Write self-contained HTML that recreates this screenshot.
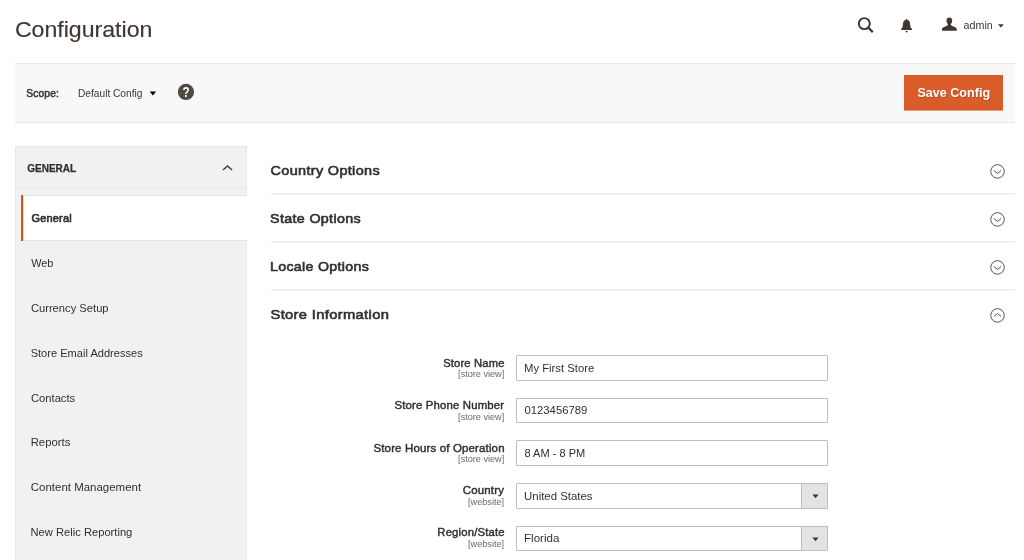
<!DOCTYPE html>
<html lang="en">
<head>
<meta charset="utf-8">
<title>Configuration</title>
<style>
html,body{margin:0;padding:0;}
body{width:1024px;height:560px;overflow:hidden;background:#fff;position:relative;font-family:"Liberation Sans",Arial,sans-serif;color:#303030;}
#wrap{position:absolute;left:0;top:0;width:1024px;height:560px;overflow:hidden;will-change:transform;}
.t{position:absolute;white-space:nowrap;line-height:1;margin:0;padding:0;}
.abs{position:absolute;}
/* scope bar */
#bar{left:15px;top:63px;width:1000px;height:58px;background:#f8f8f8;border-top:1px solid #e8e8e8;border-bottom:1px solid #e6e6e6;box-sizing:content-box;}
#save{left:904px;top:75px;width:99px;height:35px;background:#da5c28;border-bottom:1px solid #e89c7d;}
/* sidebar */
#nav{left:15px;top:146px;width:232px;height:414px;background:#f1f1f1;box-sizing:border-box;border:1px solid #e8e8e8;border-bottom:0;}
#navline{left:15px;top:188px;width:232px;height:1px;background:#e7e7e7;}
#navact{left:21px;top:195px;width:226px;height:46px;background:#fff;box-sizing:border-box;border-top:1px solid #e3e3e3;border-bottom:1px solid #e3e3e3;}
/* sections */
.sl{left:270.5px;width:744.5px;height:2px;background:#efefef;}
/* form */
.in{left:516px;width:312px;height:26px;box-sizing:border-box;border:1px solid #bebebe;background:#fff;border-radius:1px;}
.sb{left:801px;width:27px;height:26px;box-sizing:border-box;border:1px solid #bebebe;background:#e3e3e3;border-radius:0 1px 1px 0;}
</style>
</head>
<body>
<div id="wrap">

<!-- header icons -->
<svg class="abs" style="left:856px;top:16px" width="20" height="20" viewBox="0 0 20 20"><circle cx="8.3" cy="7.65" r="5.5" fill="none" stroke="#41362f" stroke-width="1.9"/><path d="M12.1 11.5 L16.8 16.1" stroke="#41362f" stroke-width="2.3" fill="none"/></svg>
<svg class="abs" style="left:898px;top:17px" width="18" height="18" viewBox="0 0 18 18"><path d="M8.55 1.9C7.9 1.9 7.6 2.3 7.6 2.9C5.8 3.2 5.2 4.6 5.1 6.2L4.6 9.8C4.6 10.6 4 11.2 3.2 11.7L3.2 12.9L13.9 12.9L13.9 11.7C13.1 11.2 12.5 10.6 12.4 9.8L12 6.2C11.9 4.6 11.3 3.2 9.5 2.9C9.5 2.3 9.2 1.9 8.55 1.9Z" fill="#41362f"/><path d="M7.1 14L10 14L8.55 15.8Z" fill="#41362f"/></svg>
<svg class="abs" style="left:940px;top:16px" width="18" height="16" viewBox="0 0 18 16"><path d="M9.35 1.5C7.6 1.5 6.5 2.7 6.5 4.6C6.5 6 7 7.2 7.8 7.9C8 8.3 8 8.9 7.6 9.2C6.6 9.9 5.2 10.5 4.2 11.1C3.2 11.6 2.2 12 2 12.8L2 14.85L16.7 14.85L16.7 12.8C16.5 12 15.5 11.6 14.5 11.1C13.5 10.5 12.1 9.9 11.1 9.2C10.7 8.9 10.7 8.3 10.9 7.9C11.7 7.2 12.2 6 12.2 4.6C12.2 2.7 11.1 1.5 9.35 1.5Z" fill="#41362f"/></svg>
<svg class="abs" style="left:997.8px;top:23.7px" width="7" height="5" viewBox="0 0 7 5"><path d="M0 0.2h5.8L2.9 3.5z" fill="#41362f"/></svg>

<!-- scope bar -->
<div class="abs" id="bar"></div>
<svg class="abs" style="left:149px;top:91px" width="8" height="6" viewBox="0 0 8 6"><path d="M0.7 0.5h6.4L3.9 4.5z" fill="#000"/></svg>
<svg class="abs" style="left:177px;top:83px" width="18" height="18" viewBox="0 0 18 18"><circle cx="8.95" cy="8.9" r="8.1" fill="#514943"/><text transform="translate(8.95 14.1) scale(0.8 1)" font-family="Liberation Sans, sans-serif" font-weight="bold" font-size="14.6" text-anchor="middle" fill="#fff">?</text></svg>
<div class="abs" id="save"></div>

<!-- sidebar -->
<div class="abs" id="nav"></div>
<div class="abs" id="navline"></div>
<div class="abs" id="navact"></div>
<div class="abs" style="left:21px;top:195px;width:3px;height:46px;background:linear-gradient(to right,#d8540f 0,#d8540f 2px,#f6d9c9 2px)"></div>
<svg class="abs" style="left:221px;top:163px" width="13" height="9" viewBox="0 0 13 9"><path d="M1.9 7 L6.5 2.9 L11.1 7" fill="none" stroke="#41362f" stroke-width="1.3"/></svg>

<!-- sections -->
<div class="abs sl" style="top:193px"></div>
<div class="abs sl" style="top:241px"></div>
<div class="abs sl" style="top:289px"></div>

<svg class="abs" style="left:989px;top:163px" width="17" height="17" viewBox="0 0 17 17"><circle cx="8.5" cy="8.4" r="6.75" fill="none" stroke="#5a524c" stroke-width="1"/><path d="M4.9 7.6 L8.5 10.4 L12.1 7.6" fill="none" stroke="#514943" stroke-width="1"/></svg>
<svg class="abs" style="left:989px;top:211px" width="17" height="17" viewBox="0 0 17 17"><circle cx="8.5" cy="8.4" r="6.75" fill="none" stroke="#5a524c" stroke-width="1"/><path d="M4.9 7.6 L8.5 10.4 L12.1 7.6" fill="none" stroke="#514943" stroke-width="1"/></svg>
<svg class="abs" style="left:989px;top:259px" width="17" height="17" viewBox="0 0 17 17"><circle cx="8.5" cy="8.4" r="6.75" fill="none" stroke="#5a524c" stroke-width="1"/><path d="M4.9 7.6 L8.5 10.4 L12.1 7.6" fill="none" stroke="#514943" stroke-width="1"/></svg>
<svg class="abs" style="left:989px;top:307px" width="17" height="17" viewBox="0 0 17 17"><circle cx="8.5" cy="8.4" r="6.75" fill="none" stroke="#5a524c" stroke-width="1"/><path d="M4.9 9.4 L8.5 6.6 L12.1 9.4" fill="none" stroke="#514943" stroke-width="1"/></svg>

<!-- form -->
<div class="abs in" style="top:355px"></div>

<div class="abs in" style="top:398px;height:25px"></div>

<div class="abs in" style="top:440px"></div>

<div class="abs in" style="top:483px"></div>
<div class="abs sb" style="top:483px"></div>
<svg class="abs" style="left:811.5px;top:494px" width="7" height="5" viewBox="0 0 7 5"><path d="M0.4 0.5h6.2L3.5 4.2z" fill="#41362f"/></svg>

<div class="abs in" style="top:526px;height:25px"></div>
<div class="abs sb" style="top:526px;height:25px"></div>
<svg class="abs" style="left:811.5px;top:536.6px" width="7" height="5" viewBox="0 0 7 5"><path d="M0.4 0.5h6.2L3.5 4.2z" fill="#41362f"/></svg>
<div class="t" id="title" style="left:14px;top:19px;font-size:22.4px;font-weight:normal;color:#41362f;transform-origin:0 0;transform:translate(0.93px,0) scaleX(1.0320);-webkit-text-stroke:0.15px #41362f;">Configuration</div>
<div class="t" id="admin" style="left:963px;top:21px;font-size:10.2px;font-weight:normal;color:#41362f;transform-origin:0 0;transform:translate(0.59px,0) scaleX(1.0520);">admin</div>
<div class="t" id="scope" style="left:26px;top:89px;font-size:10.05px;font-weight:normal;color:#41362f;transform-origin:0 0;transform:translate(0.21px,0) scaleX(1.0201);-webkit-text-stroke:0.5px #41362f;letter-spacing:0.15px;">Scope:</div>
<div class="t" id="defcfg" style="left:78px;top:89px;font-size:10.2px;font-weight:normal;color:#41362f;transform-origin:0 0;transform:translate(0.01px,0) scaleX(0.9975);">Default Config</div>
<div class="t" id="savet" style="left:917px;top:87px;font-size:12.6px;font-weight:bold;color:#fff;transform-origin:0 0;transform:translate(0.42px,0) scaleX(0.9986);text-shadow:.8px .8px 0 rgba(0,0,0,.2);">Save Config</div>
<div class="t" id="navh" style="left:27px;top:163px;font-size:10.6px;font-weight:bold;color:#303030;transform-origin:0 0;transform:translate(0.16px,0) scaleX(0.9479);-webkit-text-stroke:0.25px #303030;">GENERAL</div>
<div class="t" id="n1" style="left:31px;top:213px;font-size:10.9px;font-weight:normal;color:#303030;transform-origin:0 0;transform:translate(0.46px,0) scaleX(1.0051);-webkit-text-stroke:0.65px #303030;letter-spacing:0.2px;">General</div>
<div class="t" id="n2" style="left:31px;top:258px;font-size:11.2px;font-weight:normal;color:#303030;transform-origin:0 0;transform:translate(0.23px,0) scaleX(0.9731);">Web</div>
<div class="t" id="n3" style="left:30px;top:303px;font-size:11.2px;font-weight:normal;color:#303030;transform-origin:0 0;transform:translate(0.88px,0) scaleX(0.9995);">Currency Setup</div>
<div class="t" id="n4" style="left:30px;top:348px;font-size:11.2px;font-weight:normal;color:#303030;transform-origin:0 0;transform:translate(0.64px,0) scaleX(0.9907);">Store Email Addresses</div>
<div class="t" id="n5" style="left:30px;top:393px;font-size:11.2px;font-weight:normal;color:#303030;transform-origin:0 0;transform:translate(0.94px,0) scaleX(1.0027);">Contacts</div>
<div class="t" id="n6" style="left:30px;top:437px;font-size:11.2px;font-weight:normal;color:#303030;transform-origin:0 0;transform:translate(0.64px,0) scaleX(1.0150);">Reports</div>
<div class="t" id="n7" style="left:30px;top:482px;font-size:11.2px;font-weight:normal;color:#303030;transform-origin:0 0;transform:translate(0.79px,0) scaleX(1.0255);">Content Management</div>
<div class="t" id="n8" style="left:30px;top:527px;font-size:11.2px;font-weight:normal;color:#303030;transform-origin:0 0;transform:translate(0.56px,0) scaleX(0.9980);">New Relic Reporting</div>
<div class="t" id="s1" style="left:270px;top:164px;font-size:13.1px;font-weight:normal;color:#303030;transform-origin:0 0;transform:translate(0.51px,0) scaleX(1.1045);-webkit-text-stroke:0.6px #303030;letter-spacing:0.3px;">Country Options</div>
<div class="t" id="s2" style="left:270px;top:212px;font-size:13.1px;font-weight:normal;color:#303030;transform-origin:0 0;transform:translate(0.11px,0) scaleX(1.0910);-webkit-text-stroke:0.6px #303030;letter-spacing:0.3px;">State Options</div>
<div class="t" id="s3" style="left:269px;top:260px;font-size:13.1px;font-weight:normal;color:#303030;transform-origin:0 0;transform:translate(0.97px,0) scaleX(1.0833);-webkit-text-stroke:0.6px #303030;letter-spacing:0.3px;">Locale Options</div>
<div class="t" id="s4" style="left:270px;top:308px;font-size:13.1px;font-weight:normal;color:#303030;transform-origin:0 0;transform:translate(0.48px,0) scaleX(1.1251);-webkit-text-stroke:0.6px #303030;letter-spacing:0.3px;">Store Information</div>
<div class="t" id="l1" style="left:443px;top:358px;font-size:10.9px;font-weight:normal;color:#303030;transform-origin:0 0;transform:translate(0.16px,0) scaleX(1.0297);-webkit-text-stroke:0.42px #303030;letter-spacing:0.15px;">Store Name</div>
<div class="t" id="c1" style="left:458px;top:371px;font-size:8.2px;font-weight:normal;color:#6a6a6a;transform-origin:0 0;transform:translate(0.11px,0) scaleX(1.1126);">[store view]</div>
<div class="t" id="v1" style="left:524px;top:363px;font-size:11.2px;font-weight:normal;color:#303030;transform-origin:0 0;transform:translate(0.00px,0) scaleX(1.0082);">My First Store</div>
<div class="t" id="l2" style="left:394px;top:400px;font-size:10.9px;font-weight:normal;color:#303030;transform-origin:0 0;transform:translate(0.47px,0) scaleX(1.0459);-webkit-text-stroke:0.42px #303030;letter-spacing:0.15px;">Store Phone Number</div>
<div class="t" id="c2" style="left:458px;top:414px;font-size:8.2px;font-weight:normal;color:#6a6a6a;transform-origin:0 0;transform:translate(0.11px,0) scaleX(1.1126);">[store view]</div>
<div class="t" id="v2" style="left:524px;top:405px;font-size:11.2px;font-weight:normal;color:#303030;transform-origin:0 0;transform:translate(0.48px,0) scaleX(1.0097);">0123456789</div>
<div class="t" id="l3" style="left:373px;top:443px;font-size:10.9px;font-weight:normal;color:#303030;transform-origin:0 0;transform:translate(0.47px,0) scaleX(1.0524);-webkit-text-stroke:0.42px #303030;letter-spacing:0.15px;">Store Hours of Operation</div>
<div class="t" id="c3" style="left:458px;top:456px;font-size:8.2px;font-weight:normal;color:#6a6a6a;transform-origin:0 0;transform:translate(0.11px,0) scaleX(1.1126);">[store view]</div>
<div class="t" id="v3" style="left:524px;top:448px;font-size:11.2px;font-weight:normal;color:#303030;transform-origin:0 0;transform:translate(0.48px,0) scaleX(0.9867);">8 AM - 8 PM</div>
<div class="t" id="l4" style="left:462px;top:485px;font-size:10.9px;font-weight:normal;color:#303030;transform-origin:0 0;transform:translate(0.71px,0) scaleX(1.0545);-webkit-text-stroke:0.42px #303030;letter-spacing:0.15px;">Country</div>
<div class="t" id="c4" style="left:468px;top:499px;font-size:8.2px;font-weight:normal;color:#6a6a6a;transform-origin:0 0;transform:translate(0.06px,0) scaleX(1.1139);">[website]</div>
<div class="t" id="v4" style="left:524px;top:491px;font-size:11.2px;font-weight:normal;color:#303030;transform-origin:0 0;transform:translate(0.05px,0) scaleX(1.0202);">United States</div>
<div class="t" id="l5" style="left:437px;top:527px;font-size:10.9px;font-weight:normal;color:#303030;transform-origin:0 0;transform:translate(0.33px,0) scaleX(1.0394);-webkit-text-stroke:0.42px #303030;letter-spacing:0.15px;">Region/State</div>
<div class="t" id="c5" style="left:468px;top:541px;font-size:8.2px;font-weight:normal;color:#6a6a6a;transform-origin:0 0;transform:translate(0.06px,0) scaleX(1.1139);">[website]</div>
<div class="t" id="v5" style="left:524px;top:533px;font-size:11.2px;font-weight:normal;color:#303030;transform-origin:0 0;transform:translate(0.00px,0) scaleX(1.0359);">Florida</div>
</div>
</body>
</html>
